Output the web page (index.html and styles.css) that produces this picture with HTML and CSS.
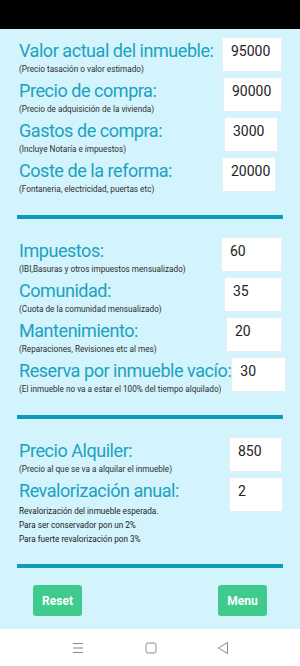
FILE: index.html
```html
<!DOCTYPE html>
<html lang="es">

<head>
    <meta charset="UTF-8">
    <meta name="viewport" content="width=device-width, initial-scale=1.0">
    <title>Calculadora inmueble</title>
    <link rel="stylesheet" href="styles.css">
</head>

<body>
<div class="status-bar"></div>

<div class="screen">
    <!-- compra -->
    <div class="section">
        <div class="row">
            <div class="label-col">
                <div class="label">Valor actual del inmueble:</div>
                <div class="hint">(Precio tasación o valor estimado)</div>
            </div>
            <input class="field field-60" type="text" value="95000">
        </div>
        <div class="row">
            <div class="label-col">
                <div class="label">Precio de compra:</div>
                <div class="hint">(Precio de adquisición de la vivienda)</div>
            </div>
            <input class="field field-59" type="text" value="90000">
        </div>
        <div class="row">
            <div class="label-col">
                <div class="label">Gastos de compra:</div>
                <div class="hint">(Incluye Notaría e impuestos)</div>
            </div>
            <input class="field field-54 shift-4" type="text" value="3000">
        </div>
        <div class="row">
            <div class="label-col">
                <div class="label">Coste de la reforma:</div>
                <div class="hint">(Fontaneria, electricidad, puertas etc)</div>
            </div>
            <input class="field field-54 shift-6" type="text" value="20000">
        </div>
    </div>

    <div class="divider"></div>

    <!-- gastos mensuales -->
    <div class="section">
        <div class="row">
            <div class="label-col">
                <div class="label">Impuestos:</div>
                <div class="hint">(IBI,Basuras y otros impuestos mensualizado)</div>
            </div>
            <input class="field field-61" type="text" value="60">
        </div>
        <div class="row">
            <div class="label-col">
                <div class="label">Comunidad:</div>
                <div class="hint">(Cuota de la comunidad mensualizado)</div>
            </div>
            <input class="field field-58" type="text" value="35">
        </div>
        <div class="row">
            <div class="label-col">
                <div class="label">Mantenimiento:</div>
                <div class="hint">(Reparaciones, Revisiones etc al mes)</div>
            </div>
            <input class="field field-56" type="text" value="20">
        </div>
        <div class="row">
            <div class="label-col">
                <div class="label">Reserva por inmueble vacío:</div>
                <div class="hint">(El inmueble no va a estar el 100% del tiempo alquilado)</div>
            </div>
            <input class="field field-55 shift-out" type="text" value="30">
        </div>
    </div>

    <div class="divider"></div>

    <!-- alquiler -->
    <div class="section">
        <div class="row">
            <div class="label-col">
                <div class="label">Precio Alquiler:</div>
                <div class="hint">(Precio al que se va a alquilar el inmueble)</div>
            </div>
            <input class="field field-53" type="text" value="850">
        </div>
        <div class="row">
            <div class="label-col">
                <div class="label">Revalorización anual:</div>
                <div class="hint hint-dark hint-first">Revalorización del inmueble esperada.</div>
                <div class="hint hint-dark">Para ser conservador pon un 2%</div>
                <div class="hint hint-dark">Para fuerte revalorización pon 3%</div>
            </div>
            <input class="field field-54 shift-out-1" type="text" value="2">
        </div>
    </div>

    <div class="divider"></div>

    <div class="buttons">
        <button class="btn">Reset</button>
        <button class="btn">Menu</button>
    </div>
</div>

<div class="nav-bar">
    <svg class="nav-icon" width="12" height="12" viewBox="0 0 12 12">
        <path d="M1 1.5h10M1 6h10M1 10.5h10" stroke="#8a8a8a" stroke-width="1" fill="none"/>
    </svg>
    <svg class="nav-icon" width="12" height="12" viewBox="0 0 12 12">
        <rect x="1" y="1" width="10" height="10" rx="2" stroke="#8a8a8a" stroke-width="1" fill="none"/>
    </svg>
    <svg class="nav-icon" width="12" height="14" viewBox="0 0 12 14">
        <path d="M10.5 1.5v11L1.5 7z" stroke="#8a8a8a" stroke-width="1" stroke-linejoin="round" fill="none"/>
    </svg>
</div>
</body>

</html>
```

FILE: styles.css
```css
body {
    margin: 0;
    width: 300px;
    height: 666px;
    overflow: hidden;
    font-family: Roboto, "Liberation Sans", sans-serif;
    background-color: #ffffff;
}

.status-bar {
    height: 29px;
    background-color: #000000;
}

.screen {
    height: 600px;
    padding-top: 8px;
    box-sizing: border-box;
    background-color: #d3f4fc;
}

.section {
    padding: 0 18px 0 19px;
}

.row {
    display: flex;
    justify-content: space-between;
    align-items: flex-start;
    min-height: 40px;
}

.label-col {
    white-space: nowrap;
}

.label {
    font-size: 18px;
    letter-spacing: -0.45px;
    line-height: 25px;
    padding-top: 1px;
    margin-bottom: -1px;
    color: #1aa2c3;
}

.hint {
    font-size: 8.2px;
    line-height: 15px;
    color: #2e2e2e;
}

.hint-dark {
    line-height: 14px;
    color: #222222;
}

.hint-first {
    margin-top: 2px;
}

.field {
    flex-shrink: 0;
    height: 35px;
    box-sizing: border-box;
    padding: 0 0 7px 8px;
    border: 1px solid #e6eef0;
    background-color: #ffffff;
    font-family: Roboto, "Liberation Sans", sans-serif;
    font-size: 14px;
    color: #222222;
    outline: none;
}

.field-53 { width: 53px; }
.field-54 { width: 54px; }
.field-55 { width: 55px; }
.field-56 { width: 56px; }
.field-58 { width: 58px; }
.field-59 { width: 59px; }
.field-60 { width: 60px; }
.field-61 { width: 61px; }

.shift-4 { margin-right: 4px; }
.shift-6 { margin-right: 6px; }
.shift-out { margin-right: -2px; }
.shift-out-1 { margin-right: -1px; }

.divider {
    height: 4px;
    margin: 18px 17px;
    background-color: #0f9bbc;
}

.buttons {
    display: flex;
    justify-content: space-between;
    padding: 0 33px;
    margin-top: -1px;
}

.btn {
    width: 49px;
    height: 31px;
    border: none;
    border-radius: 3px;
    background-color: #3ecb8c;
    color: #ffffff;
    font-family: Roboto, "Liberation Sans", sans-serif;
    font-weight: bold;
    font-size: 12px;
    padding: 0;
}

.nav-bar {
    height: 37px;
    display: flex;
    justify-content: space-between;
    align-items: center;
    padding: 0 71px 0 72px;
    background-color: #ffffff;
}
```
